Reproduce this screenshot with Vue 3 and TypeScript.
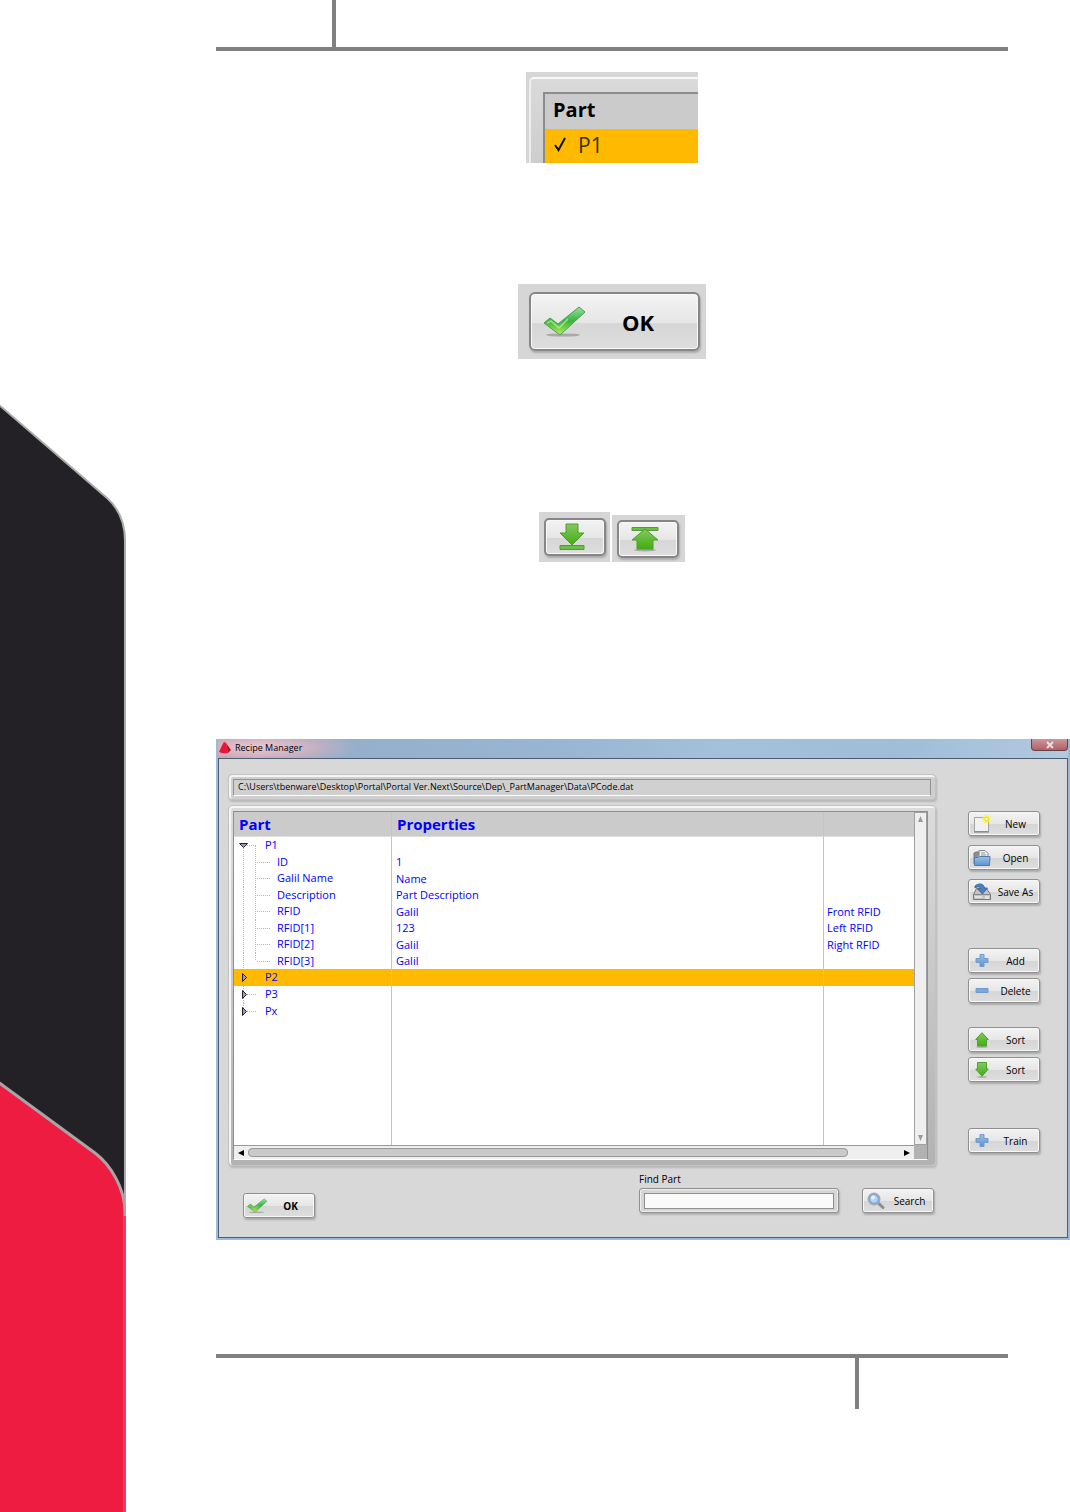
<script setup lang="ts">
import { computed, ref } from 'vue'

interface TreeRow {
  name: string
  value: string
  note: string
  level: 'part' | 'child'
  parent: string
}
interface Action {
  label: string
  icon: string
}

const path = 'C:\\Users\\tbenware\\Desktop\\Portal\\Portal Ver.Next\\Source\\Dep\\_PartManager\\Data\\PCode.dat'

const source: TreeRow[] = [
  { name: 'P1', value: '', note: '', level: 'part', parent: '' },
  { name: 'ID', value: '1', note: '', level: 'child', parent: 'P1' },
  { name: 'Galil Name', value: 'Name', note: '', level: 'child', parent: 'P1' },
  { name: 'Description', value: 'Part Description', note: '', level: 'child', parent: 'P1' },
  { name: 'RFID', value: 'Galil', note: 'Front RFID', level: 'child', parent: 'P1' },
  { name: 'RFID[1]', value: '123', note: 'Left RFID', level: 'child', parent: 'P1' },
  { name: 'RFID[2]', value: 'Galil', note: 'Right RFID', level: 'child', parent: 'P1' },
  { name: 'RFID[3]', value: 'Galil', note: '', level: 'child', parent: 'P1' },
  { name: 'P2', value: '', note: '', level: 'part', parent: '' },
  { name: 'P3', value: '', note: '', level: 'part', parent: '' },
  { name: 'Px', value: '', note: '', level: 'part', parent: '' },
]

const groups: Action[][] = [
  [
    { label: 'New', icon: 'new' },
    { label: 'Open', icon: 'open' },
    { label: 'Save As', icon: 'save' },
  ],
  [
    { label: 'Add', icon: 'plus' },
    { label: 'Delete', icon: 'minus' },
  ],
  [
    { label: 'Sort', icon: 'up' },
    { label: 'Sort', icon: 'down' },
  ],
  [{ label: 'Train', icon: 'plus' }],
]

const open = ref<string[]>(['P1'])
const selected = ref('P2')
const query = ref('')

const rows = computed(() => source.filter((r) => r.level === 'part' || open.value.includes(r.parent)))

function toggle(name: string) {
  open.value = open.value.includes(name) ? open.value.filter((n) => n !== name) : [...open.value, name]
}
function lastChild(i: number) {
  return rows.value[i + 1]?.level !== 'child'
}
</script>

<template>
  <div class="page">
    <svg class="defs" width="0" height="0" aria-hidden="true">
      <defs>
        <linearGradient id="green" x1="0" y1="0" x2="0" y2="1">
          <stop offset="0" stop-color="#86c765" />
          <stop offset="1" stop-color="#3fae0c" />
        </linearGradient>
        <linearGradient id="tick" x1="0" y1="0" x2="0" y2="1">
          <stop offset="0" stop-color="#9be0a0" />
          <stop offset="0.5" stop-color="#35b53f" />
          <stop offset="1" stop-color="#b9ec5a" />
        </linearGradient>
        <linearGradient id="blue" x1="0" y1="0" x2="0" y2="1">
          <stop offset="0" stop-color="#9dc0e6" />
          <stop offset="1" stop-color="#5d92cd" />
        </linearGradient>
        <symbol id="i-check" viewBox="0 0 42 32">
          <ellipse cx="20" cy="29" rx="17" ry="1.6" fill="#888" opacity="0.6" />
          <path d="M1 17 L7 12 L15 18 L36 1 L42 6 L17 29 Z" fill="url(#tick)" stroke="#4f9a50" stroke-width="1" />
          <path d="M4 17 L8 15 L16 22 L25 13" fill="none" stroke="#c9f29b" stroke-width="1.5" opacity="0.7" />
        </symbol>
        <symbol id="i-new" viewBox="0 0 18 18">
          <path d="M1.500 2.500H15.500V16.500H1.500Z" fill="#f1f1f1" stroke="#a4a4a4" />
          <path d="M1 17H16" stroke="#777" />
          <circle cx="13.500" cy="4" r="4" fill="#fff23a" opacity="0.8" />
          <circle cx="13.500" cy="4" r="1.800" fill="#fffde0" stroke="#f2dc00" />
        </symbol>
        <symbol id="i-open" viewBox="0 0 18 18">
          <path d="M1 15V4L3 3H6V6" fill="#8b8f95" stroke="#777" />
          <path d="M6 9V1.500H12L15 4.500V9Z" fill="#eee" stroke="#888" />
          <path d="M8 4H12M8 6H13" stroke="#999" />
          <path d="M1.500 16.500V8.500H5L6.500 7.500H17L16.500 16.500Z" fill="url(#blue)" stroke="#4b7cb6" />
        </symbol>
        <symbol id="i-save" viewBox="0 0 20 18">
          <path d="M1.500 11.500L4.500 5.500H14.500L18.500 11.500V16.500H1.500Z" fill="#c4c4c4" stroke="#777" />
          <path d="M1.500 11.500H18.500" stroke="#888" />
          <path d="M3 14H10M14 13V16M16 13V16" stroke="#fff" />
          <path d="M3 3C6 0 12 0 12.500 5H15.500L10.500 11L5.500 6H8.500C8.500 4 6 3 3 5Z" fill="#4b80bf" stroke="#2f5f9e" stroke-width="0.800" />
        </symbol>
        <symbol id="i-plus" viewBox="0 0 13 13">
          <path d="M4.500 0.500H8.500V4.500H12.500V8.500H8.500V12.500H4.500V8.500H0.500V4.500H4.500Z" fill="url(#blue)" stroke="#6f9bce" />
        </symbol>
        <symbol id="i-minus" viewBox="0 0 13 13">
          <path d="M0.500 4.500H12.500V8.500H0.500Z" fill="#7ba8dc" stroke="#6f9bce" />
        </symbol>
        <symbol id="i-up" viewBox="0 0 14 16">
          <ellipse cx="7" cy="15" rx="6" ry="1" fill="#999" opacity="0.6" />
          <path d="M7 0.700L13.300 7.500H11.500V14H2.500V7.500H0.700Z" fill="url(#green)" stroke="#4da02b" />
        </symbol>
        <symbol id="i-down" viewBox="0 0 14 16">
          <ellipse cx="7" cy="15" rx="5" ry="1" fill="#999" opacity="0.6" />
          <path d="M2.500 0.500H11.500V7H13.300L7 14.300L0.700 7H2.500Z" fill="url(#green)" stroke="#4da02b" />
        </symbol>
        <symbol id="i-search" viewBox="0 0 18 18">
          <path d="M10 10L16 15.500" stroke="#8c8c8c" stroke-width="3" stroke-linecap="round" />
          <circle cx="7" cy="7" r="5.500" fill="#b5d5f5" stroke="#a3acb6" stroke-width="2" />
          <circle cx="7" cy="7" r="4.300" fill="#b4d4f5" stroke="#6a9fdd" />
          <circle cx="6" cy="5.500" r="2" fill="#e6f3ff" />
        </symbol>
      </defs>
    </svg>

    <aside class="side" aria-hidden="true">
      <svg width="100%" height="100%" viewBox="0 0 126 1512" preserveAspectRatio="xMinYMin slice">
        <path d="M-2 404L107 498Q125 514 125 541V1520H-2Z" fill="#232125" stroke="#a9adad" stroke-width="2" />
        <path d="M-2 1082L95 1153C111 1165 125 1189 125 1212V1520H-2Z" fill="#ed1c40" stroke="#a8a5a8" stroke-width="3" />
        <path d="M125 1216V1512" stroke="#ee3c5a" stroke-width="3" />
      </svg>
    </aside>

    <main class="sheet">
      <div class="head"><div class="head-cell"></div></div>

      <section class="figures">
        <div class="snip list-snip">
          <div class="snip-frame">
            <div class="snip-list">
              <div class="snip-title">Part</div>
              <div class="snip-row">
                <svg width="14" height="16" viewBox="0 0 14 16"><path d="M2 8L5.500 13L12 1" fill="none" stroke="#111" stroke-width="2" /></svg>
                <span>P1</span>
              </div>
            </div>
          </div>
        </div>

        <div class="snip ok-snip">
          <button type="button" class="btn big">
            <svg class="ico"><use href="#i-check" /></svg>
            <span class="txt">OK</span>
          </button>
        </div>

        <div class="arrows">
          <div class="snip down-snip">
            <button type="button" class="btn mid" aria-label="Move to bottom">
              <svg width="28" height="28" viewBox="0 0 28 28">
                <path d="M8 1H20V10H26L14 22L2 10H8Z" fill="url(#green)" stroke="#4da02b" />
                <path d="M2 22.500H26V26.500H2Z" fill="#6cbf45" stroke="#4da02b" />
              </svg>
            </button>
          </div>
          <div class="snip up-snip">
            <button type="button" class="btn mid" aria-label="Move to top">
              <svg width="28" height="28" viewBox="0 0 28 28">
                <ellipse cx="14" cy="25" rx="11" ry="1.500" fill="#aaa" />
                <path d="M1 2.500H27V5.500H1Z" fill="#6cbf45" stroke="#4da02b" />
                <path d="M14 4L27 15H22V24H6V15H1Z" fill="url(#green)" stroke="#4da02b" />
              </svg>
            </button>
          </div>
        </div>
      </section>

      <section class="dialog">
        <header class="bar">
          <svg width="14" height="14" viewBox="0 0 14 14"><path d="M1 11Q4 4 6 1L8 2L10 12Q5 13 1 11Z" fill="#e81636" /><path d="M8 2L13 9L10 12Z" fill="#b5102a" /></svg>
          <h1>Recipe Manager</h1>
          <button type="button" class="close" aria-label="Close">
            <svg width="10" height="8" viewBox="0 0 10 8"><path d="M2 1L8 7M8 1L2 7" stroke="#eadfe2" stroke-width="2" /></svg>
          </button>
        </header>

        <div class="body">
          <div class="left">
            <div class="frame path-frame"><div class="path">{{ path }}</div></div>

            <div class="frame list-frame">
              <div class="list">
                <div class="view">
                  <table>
                    <colgroup><col class="c1" /><col class="c2" /><col /></colgroup>
                    <thead>
                      <tr><th scope="col">Part</th><th scope="col">Properties</th><th></th></tr>
                    </thead>
                    <tbody>
                      <tr
                        v-for="(row, i) in rows"
                        :key="row.name + i"
                        :class="[row.level, { selected: row.name === selected }]"
                        @click="selected = row.name"
                      >
                        <td>
                          <div class="tree">
                            <svg v-if="row.level === 'child'" class="lines child-lines">
                              <path d="M9.500 0V17" />
                              <path :d="lastChild(i) ? 'M21.500 0V8' : 'M21.500 0V17'" />
                              <path d="M23 8.500H36" />
                            </svg>
                            <svg v-else class="lines" @click.stop="toggle(row.name)">
                              <path :d="i === 0 ? 'M9.500 9V17' : i === rows.length - 1 ? 'M9.500 0V8' : 'M9.500 0V17'" />
                              <path d="M13 8.500H22" />
                              <path v-if="open.includes(row.name)" d="M21.500 9V17" />
                              <path v-if="open.includes(row.name)" class="knob" d="M5.500 6.500H13.500L9.500 10.500Z" />
                              <path v-else class="knob" d="M8.500 4.500V12.500L12.500 8.500Z" />
                            </svg>
                            <span>{{ row.name }}</span>
                          </div>
                        </td>
                        <td>{{ row.value }}</td>
                        <td class="note">{{ row.note }}</td>
                      </tr>
                      <tr class="rest"><td></td><td></td><td></td></tr>
                    </tbody>
                  </table>
                </div>
                <div class="vscroll">
                  <svg width="5" height="6" viewBox="0 0 5 6"><path d="M2.500 0L5 6H0Z" fill="#9a9a9a" /></svg>
                  <svg width="5" height="6" viewBox="0 0 5 6"><path d="M2.500 6L5 0H0Z" fill="#9a9a9a" /></svg>
                </div>
                <div class="hscroll">
                  <svg width="6" height="6" viewBox="0 0 6 6"><path d="M0 3L6 0V6Z" fill="#000" /></svg>
                  <div class="track"><div class="thumb"></div></div>
                  <svg width="6" height="6" viewBox="0 0 6 6"><path d="M6 3L0 0V6Z" fill="#000" /></svg>
                </div>
                <div class="corner"></div>
              </div>
            </div>

            <div class="foot">
              <button type="button" class="btn ok">
                <svg class="ico"><use href="#i-check" /></svg>
                <span class="txt">OK</span>
              </button>
              <div class="find">
                <label for="find-part">Find Part</label>
                <div class="find-frame"><input id="find-part" v-model="query" type="text" /></div>
              </div>
              <button type="button" class="btn search">
                <svg class="ico"><use href="#i-search" /></svg>
                <span class="txt">Search</span>
              </button>
            </div>
          </div>

          <nav class="actions">
            <div v-for="(g, gi) in groups" :key="gi" class="group">
              <button v-for="(a, ai) in g" :key="ai" type="button" class="btn">
                <svg class="ico" :class="'ico-' + a.icon"><use :href="'#i-' + a.icon" /></svg>
                <span class="txt">{{ a.label }}</span>
              </button>
            </div>
          </nav>
        </div>
      </section>

      <div class="tail"><div class="tail-cell"></div></div>
    </main>
  </div>
</template>

<style>
body {
  margin: 0;
  background: #fff;
}
</style>

<style scoped>
* {
  box-sizing: border-box;
}
.page {
  display: grid;
  grid-template-columns: 126px minmax(0, 1fr);
  min-height: 100vh;
  font-family: 'Open Sans', 'Noto Sans', sans-serif;
  color: #000;
}
.defs {
  position: absolute;
}
.side svg {
  display: block;
}
.sheet {
  display: flex;
  flex-direction: column;
  padding-left: 90px;
}
.head,
.figures,
.tail {
  margin-right: 62px;
}
.head {
  height: 51px;
  border-bottom: 4px solid #808080;
}
.head-cell {
  width: 120px;
  height: 100%;
  border-right: 4px solid #808080;
}
.figures {
  display: flex;
  flex-direction: column;
  align-items: center;
  padding-top: 21px;
  height: 688px;
}
.snip {
  background: #d6d6d6;
}

/* figure: list header */
.list-snip {
  width: 172px;
  height: 91px;
  padding: 5px 0 0 3px;
  overflow: hidden;
}
.snip-frame {
  height: 100%;
  padding: 13px 0 0 12px;
  border-top: 2px solid #f8f8f8;
  border-left: 2px solid #eee;
  border-top-left-radius: 5px;
  background: linear-gradient(#dadada, #cdcdcd);
}
.snip-list {
  border-top: 2px solid #8c8c8c;
  border-left: 2px solid #8c8c8c;
}
.snip-title {
  height: 35px;
  padding-left: 8px;
  background: #cbcbcb;
  font-size: 20px;
  font-weight: 700;
  line-height: 32px;
}
.snip-row {
  display: flex;
  align-items: center;
  gap: 11px;
  height: 34px;
  padding: 0 0 2px 8px;
  background: #ffba00;
  color: #3a3000;
  font-size: 21px;
  line-height: 32px;
}

/* push buttons */
.btn {
  display: flex;
  align-items: center;
  width: 72px;
  height: 25px;
  margin: 0;
  padding: 0 0 0 3px;
  border: 1px solid #8f8f8f;
  border-radius: 3px;
  background: linear-gradient(#f3f3f3, #e6e6e6 52%, #d6d6d6 54%, #dedede);
  box-shadow: inset 0 0 0 1px #f8f8f8, 1px 2px 2px #aaa;
  color: #000;
  font-family: inherit;
  font-size: 10px;
  line-height: 16px;
}
.ico {
  flex: none;
  width: 20px;
  height: 18px;
}
.ico-plus,
.ico-minus {
  height: 13px;
}
.ico-up,
.ico-down {
  height: 16px;
}
.txt {
  flex: 1;
  text-align: center;
}
.ok .txt {
  font-size: 10px;
  font-weight: 700;
}
.ok-snip {
  width: 188px;
  height: 75px;
  margin-top: 121px;
  padding: 8px 6px 0 11px;
}
.big {
  width: 171px;
  height: 59px;
  padding: 0 8px 0 11px;
  border: 2px solid #868686;
  border-radius: 6px;
  font-size: 22px;
  font-weight: 700;
}
.big .ico {
  width: 44px;
  height: 32px;
}
.arrows {
  display: flex;
  align-items: flex-end;
  gap: 2px;
  margin-top: 153px;
}
.down-snip {
  height: 50px;
  padding: 6px 4px 0 5px;
}
.up-snip {
  height: 47px;
  padding: 5px 6px 0 5px;
}
.mid {
  justify-content: center;
  width: 62px;
  height: 38px;
  padding: 0 6px 0 0;
  border: 2px solid #868686;
  border-radius: 5px;
}

/* dialog window */
.dialog {
  border: 2px solid #9dbbd8;
  border-top: 0;
  background: #d8d8d8;
}
.bar {
  display: flex;
  align-items: flex-start;
  gap: 3px;
  height: 19px;
  padding: 2px 0 0;
  background:
    radial-gradient(ellipse 100px 20px at 40px 8px, rgba(240, 205, 215, 0.9), rgba(220, 180, 195, 0.6) 60%, transparent),
    linear-gradient(90deg, #b5929f, #94aecb 14%, #9ab5d3 40%, #a3c0dc 60%, #9fbdd9 80%, #b3c9de);
}
h1 {
  flex: 1;
  margin: 0;
  font-size: 9px;
  font-weight: 400;
  line-height: 13px;
}
.close {
  display: flex;
  align-items: center;
  justify-content: center;
  width: 37px;
  height: 12px;
  margin: -2px 0 0;
  padding: 0;
  border: 1px solid #67404a;
  border-top: 0;
  border-radius: 0 0 4px 4px;
  background: linear-gradient(#c9989c, #b35f66);
}
.body {
  display: grid;
  grid-template-columns: minmax(0, 1fr) 72px;
  column-gap: 32px;
  height: 480px;
  padding: 15px 27px 0 9px;
  border: 1px solid #4d5c70;
}
.frame {
  border: 1px solid #c2c2c2;
  border-radius: 4px;
  background: linear-gradient(#dcdcdc, #b2b2b2);
  box-shadow: inset 1px 1px 0 1px #f5f5f5, 1px 2px 2px #b8b8b8;
}
.path-frame {
  height: 26px;
  padding: 4px;
  background: #cfcfcf;
}
.path {
  height: 17px;
  padding-left: 4px;
  overflow: hidden;
  border: 1px solid #929292;
  border-bottom-color: #fff;
  background: #d0d0d0;
  font-size: 9px;
  line-height: 14px;
  white-space: nowrap;
}
.list-frame {
  height: 361px;
  margin-top: 5px;
  padding: 5px 7px 5px 4px;
}
.list {
  display: grid;
  grid-template-columns: minmax(0, 1fr) 13px;
  grid-template-rows: minmax(0, 1fr) 14px;
  height: 100%;
  border: 1px solid #8f8f8f;
  border-bottom-color: #fff;
}
.view {
  background: #fff;
}
table {
  width: 100%;
  height: 100%;
  table-layout: fixed;
  border-collapse: separate;
  border-spacing: 0;
  color: #00f;
  font-size: 11px;
  line-height: 16px;
}
.c1 {
  width: 158px;
}
.c2 {
  width: 432px;
}
th,
td {
  padding: 0 0 0 4px;
  border-right: 1px solid #c4c4c4;
  text-align: left;
  white-space: nowrap;
}
th:last-child,
td:last-child {
  border-right: 0;
}
td.note {
  padding-left: 3px;
}
th {
  height: 25px;
  padding-left: 5px;
  border-bottom: 1px solid #ddd;
  background: #cbcbcb;
  font-size: 15px;
  line-height: 24px;
}
td:first-child {
  padding-left: 0;
}
tr.part td,
tr.child td {
  height: 17px;
}
tr.child:nth-child(even) td {
  height: 16px;
}
.tree {
  display: flex;
  height: 17px;
}
tr.child:nth-child(even) .tree {
  height: 16px;
}
.selected td {
  background: #ffba00;
}
.rest td {
  height: auto;
}
.lines {
  width: 31px;
  height: 100%;
  fill: none;
  stroke: #b4b4b4;
  stroke-dasharray: 1 1;
}
.child-lines {
  width: 43px;
}
.knob {
  fill: #9a94e8;
  stroke: #222;
  stroke-dasharray: none;
}
.vscroll {
  display: flex;
  flex-direction: column;
  align-items: center;
  justify-content: space-between;
  padding: 3px 0;
  border: 1px solid #a0a0a0;
  background: #efefef;
}
.hscroll {
  display: flex;
  align-items: center;
  gap: 4px;
  padding: 0 4px;
  border-top: 1px solid #999;
  background: #efefef;
}
.track {
  flex: 1;
}
.thumb {
  width: 92%;
  height: 9px;
  border: 1px solid #999;
  border-radius: 4px;
  background: #cacaca;
}
.corner {
  background: #b2b2b2;
}
.foot {
  display: flex;
  align-items: flex-start;
  padding: 7px 2px 0 15px;
}
.foot .ok {
  margin-top: 20px;
}
.find {
  width: 200px;
  margin-left: auto;
}
.find label {
  display: block;
  height: 15px;
  font-size: 10px;
  line-height: 13px;
}
.find-frame {
  height: 25px;
  padding: 4px;
  border: 1px solid #8f8f8f;
  border-radius: 3px;
  background: #d6d6d6;
  box-shadow: inset 0 0 0 1px #eee, 1px 2px 2px #b0b0b0;
}
.find input {
  display: block;
  width: 100%;
  height: 16px;
  padding: 0 3px;
  border: 1px solid #8f8f8f;
  background: #fafafa;
  font: inherit;
  font-size: 10px;
}
.search {
  margin: 15px 0 0 23px;
}
.actions {
  padding-top: 37px;
}
.group {
  display: flex;
  flex-direction: column;
  gap: 5px;
  margin-bottom: 24px;
}
.group:first-child {
  gap: 9px;
  margin-bottom: 44px;
}
.group:nth-child(3) {
  margin-bottom: 46px;
}

/* page footer rule */
.tail {
  margin-top: 114px;
  margin-bottom: 103px;
  border-top: 4px solid #808080;
}
.tail-cell {
  width: 153px;
  height: 51px;
  margin-left: auto;
  border-left: 4px solid #808080;
}
</style>
